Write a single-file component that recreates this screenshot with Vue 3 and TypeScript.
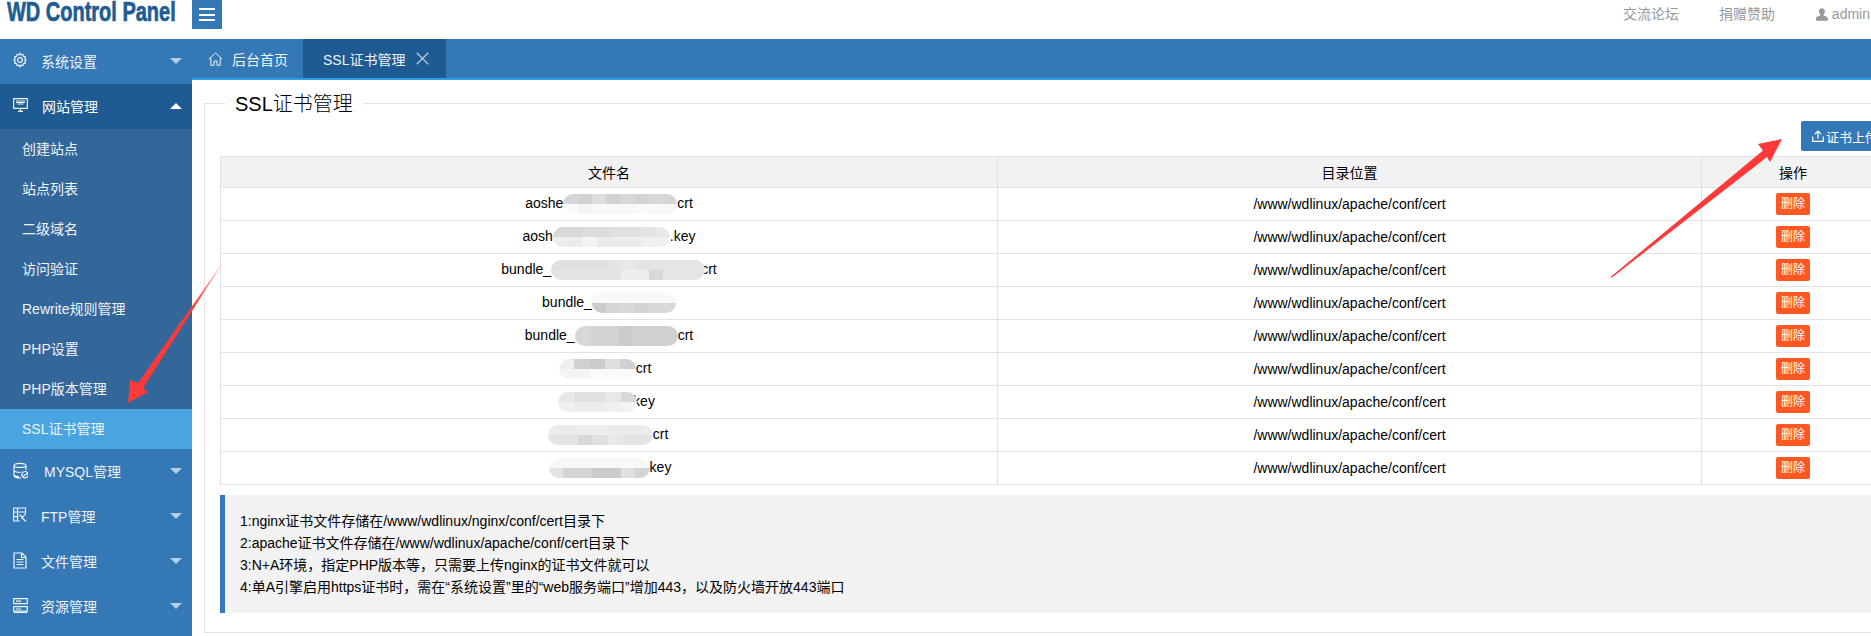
<script setup lang="ts">
interface Menu { label: string; icon: string; gap: number; open?: boolean }
const gear = 'M7 1.2l1 1.7 1.9-.5.5 1.9 1.9.5-.5 1.9 1.2 1.3-1.2 1.3.5 1.9-1.9.5-.5 1.9-1.9-.5L7 14.8l-1-1.7-1.9.5-.5-1.9-1.9-.5.5-1.9L1 8l1.2-1.3-.5-1.9 1.9-.5.5-1.9 1.9.5zM7 5.6a2.4 2.4 0 1 0 0 4.8 2.4 2.4 0 0 0 0-4.8z'
const monitor = 'M.7 1.7h13.6v9.6H.7zM3 4h9M3 5.500h9M4.500 7h6M5 14.3h5M7.5 11.3v3'
const db = 'M1 3.5C1 .7 13 .7 13 3.5v4.5M1 3.5c0 2.6 12 2.6 12 0M1 3.5v10c0 2.2 4.5 2.7 7 2.4M1 8c0 2 4 2.6 6.5 2.4M1 12.5c0 1.3 2.5 2 5 2.1M12 9.5a3.2 3.2 0 1 0 .01 0zM9.800 14.500l4.400-3'
const ftp = 'M12.500 6V1H.7v13h6M.7 5h11.800M.7 9.500H6M4.500 1v13M6.500 7.500l3 3 3.500-4.500M8.500 10.500l4.500 4'
const file = 'M1 1h8l4 4v11H1zM8.500 1v4.500H13M3.500 7.500h7M3.500 10h7M3.500 12.500h7'
const server = 'M.7 1.700h13.600v5H.7zM.7 9.700h13.600v4.500H.7zM.7 15.500h13.600M3 4.200h5M3 12h5'

const topMenus: Menu[] = [
  { label: '系统设置', icon: gear, gap: 13 },
  { label: '网站管理', icon: monitor, gap: 14, open: true },
]
const bottomMenus: Menu[] = [
  { label: 'MYSQL管理', icon: db, gap: 16 },
  { label: 'FTP管理', icon: ftp, gap: 13 },
  { label: '文件管理', icon: file, gap: 13 },
  { label: '资源管理', icon: server, gap: 13 },
]
const subMenus = ['创建站点', '站点列表', '二级域名', '访问验证', 'Rewrite规则管理', 'PHP设置', 'PHP版本管理', 'SSL证书管理']

interface FileRow { pre: string; suf: string; w: number; ml: number; mr: number; tones: string[] }
const t = (s: string) => s.split(' ')
const files: FileRow[] = [
  { pre: 'aoshe', suf: 'crt', w: 114, ml: 0, mr: 0, tones: t('d6 d2 de d2 d8 d4 d8 d6 fa f4 f8 f8 f8 fa f8 f8') },
  { pre: 'aosh', suf: '.key', w: 117, ml: 0, mr: 0, tones: t('d8 d8 dc dc e0 e0 e4 e8 ec ec f4 ec ec ec f0 f0') },
  { pre: 'bundle_', suf: 'crt', w: 154, ml: 0, mr: -4, tones: t('e0 e0 e0 e0 e4 e8 e4 e4 e4 e4 e4 e4 e4 e4 e4 e4 ee ee d8 e6 e6 e6') },
  { pre: 'bundle_', suf: '', w: 84, ml: 0, mr: 0, tones: t('f8 f8 f8 f8 f8 f8 cc d6 d8 d4 d8 d8') },
  { pre: 'bundle_', suf: 'crt', w: 103, ml: 0, mr: 0, tones: t('d8 d4 d4 cc d0 d0 d0 d8 d4 d4 cc d0 d0 d0') },
  { pre: '', suf: 'crt', w: 77, ml: -8, mr: 0, tones: t('ee d0 cc de d0 f4 f4 fa fa fa') },
  { pre: '', suf: 'key', w: 79, ml: -5, mr: -4, tones: t('e8 e0 e0 e8 d8 f0 ec ec f0 f2') },
  { pre: '', suf: 'crt', w: 105, ml: -2, mr: 0, tones: t('ec ec ee ee ec ec ec e4 e4 d8 e0 e8 e4 e4') },
  { pre: '', suf: 'key', w: 101, ml: 2, mr: 0, tones: t('f8 f8 f8 f8 f8 f8 f8 e4 d4 d4 cc cc e0 d4') },
]
const notes = [
  '1:nginx证书文件存储在/www/wdlinux/nginx/conf/cert目录下',
  '2:apache证书文件存储在/www/wdlinux/apache/conf/cert目录下',
  '3:N+A环境，指定PHP版本等，只需要上传nginx的证书文件就可以',
  '4:单A引擎启用https证书时，需在“系统设置”里的“web服务端口”增加443，以及防火墙开放443端口',
]
const blurStyle = (f: FileRow) => ({
  width: f.w + 'px',
  marginLeft: f.ml + 'px',
  marginRight: f.mr + 'px',
  gridTemplateColumns: `repeat(${f.tones.length / 2}, 1fr)`,
})
</script>

<template>
  <div class="app">
    <header class="top">
      <div class="logo"><span>WD Control Panel</span></div>
      <button class="burger" type="button" aria-label="menu"><i></i><i></i><i></i></button>
      <nav class="links">
        <a>交流论坛</a>
        <a>捐赠赞助</a>
        <a class="user">
          <svg width="14" height="15" viewBox="0 0 14 15"><path fill="#9a9a9a" d="M7 0c2.200 0 3.500 1.700 3.500 3.800 0 1.600-.7 3-1.500 3.800v1.200c1.600.6 5 1.300 5 3.200v3H0v-3c0-1.900 3.400-2.600 5-3.200V7.600C4.200 6.800 3.500 5.400 3.500 3.800 3.500 1.700 4.800 0 7 0z"/></svg>
          admin
        </a>
      </nav>
    </header>

    <aside class="side">
      <div v-for="m in topMenus" :key="m.label" class="menu" :class="{ open: m.open }">
        <svg class="ico" width="15" height="17" viewBox="0 0 15 17"><path :d="m.icon"/></svg>
        <span :style="{ marginLeft: m.gap + 'px' }">{{ m.label }}</span>
        <b class="caret"></b>
      </div>
      <ul class="sub">
        <li v-for="(s, i) in subMenus" :key="s" :class="{ on: i === subMenus.length - 1 }">{{ s }}</li>
      </ul>
      <div v-for="m in bottomMenus" :key="m.label" class="menu">
        <svg class="ico" width="15" height="17" viewBox="0 0 15 17"><path :d="m.icon"/></svg>
        <span :style="{ marginLeft: m.gap + 'px' }">{{ m.label }}</span>
        <b class="caret"></b>
      </div>
    </aside>

    <main class="main">
      <div class="tabs">
        <div class="tab home">
          <svg width="15" height="14" viewBox="0 0 15 14"><path d="M.8 7.200 7.500.9l6.700 6.300M2.800 6v7.300h3.200V9h3v4.300h3.200V6"/></svg>
          后台首页
        </div>
        <div class="tab active">
          SSL证书管理
          <svg width="13" height="13" viewBox="0 0 13 13"><path d="M.7.700l11.600 11.600M12.300.700.700 12.300"/></svg>
        </div>
      </div>

      <div class="content">
        <fieldset class="field">
          <legend>SSL证书管理</legend>
          <div class="tools">
            <button class="upload" type="button">
              <svg width="12" height="12" viewBox="0 0 12 12"><path d="M.7 6.500v4.800h10.600V6.500M6 8.500V1M3 4l3-3 3 3"/></svg>
              证书上传
            </button>
          </div>
          <table class="grid">
            <colgroup><col class="c1"><col class="c2"><col class="c3"></colgroup>
            <thead><tr><th>文件名</th><th>目录位置</th><th>操作</th></tr></thead>
            <tbody>
              <tr v-for="(f, i) in files" :key="i">
                <td>{{ f.pre }}<span class="blur" :style="blurStyle(f)"><i v-for="(c, j) in f.tones" :key="j" :style="{ background: '#' + c + c + c }"></i></span>{{ f.suf }}</td>
                <td>/www/wdlinux/apache/conf/cert</td>
                <td><button class="del" type="button">删除</button></td>
              </tr>
            </tbody>
          </table>
          <blockquote class="quote">
            <p v-for="n in notes" :key="n">{{ n }}</p>
          </blockquote>
        </fieldset>
      </div>
    </main>

    <svg class="arrows" width="1871" height="636" viewBox="0 0 1871 636">
      <defs>
        <linearGradient id="a1" x1="226" y1="257" x2="190" y2="308" gradientUnits="userSpaceOnUse">
          <stop offset="0" stop-color="#ffd5d5"/><stop offset="1" stop-color="#ff3838"/>
        </linearGradient>
      </defs>
      <polygon fill="url(#a1)" points="226.500,257 138,383 130,380 128,403 148,392 143,388"/>
      <polygon fill="#ff3838" points="1610.500,277 1763,150.500 1758,144 1782,139 1770,162 1767,157 1612,277.500"/>
    </svg>
  </div>
</template>

<style>
html, body { margin: 0; overflow: hidden; background: #fff; }
</style>

<style scoped>
.app {
  position: relative;
  width: 1913px;
  height: 636px;
  display: grid;
  grid-template-columns: 192px 1fr;
  grid-template-rows: 39px 1fr;
  overflow: hidden;
  font-family: "Liberation Sans", "Noto Sans CJK SC", sans-serif;
  font-size: 14px;
  color: #000;
}
.top {
  grid-column: 1 / -1;
  display: flex;
  align-items: flex-start;
  padding-right: 43px;
}
.logo {
  flex: none;
  width: 192px;
  padding-left: 7px;
  box-sizing: border-box;
  font-family: "Liberation Sans", sans-serif;
  font-weight: 700;
  font-size: 27px;
  line-height: 24px;
  color: #1e5c94;
  white-space: nowrap;
}
.logo span {
  display: inline-block;
  transform: scaleX(0.74);
  transform-origin: left center;
  -webkit-text-stroke: 0.7px #1e5c94;
}
.burger {
  width: 30px;
  height: 29px;
  padding: 0;
  border: 0;
  background: #3478b6;
  display: flex;
  flex-direction: column;
  align-items: center;
  justify-content: center;
  gap: 3.600px;
  position: relative;
}
.burger i { display: block; width: 16px; height: 2px; background: #fff; }
.links {
  margin-left: auto;
  display: flex;
  gap: 40px;
  color: #999;
  line-height: 28px;
}
.links a { display: flex; align-items: center; gap: 4px; white-space: nowrap; }
.links .user { width: 54px; margin-left: 1px; }

.side { background: #3478b6; overflow: hidden; color: #eef3f8; }
.menu {
  height: 45px;
  box-sizing: border-box;
  padding: 0 0 2px 13px;
  display: flex;
  align-items: center;
  position: relative;
}
.menu.open { background: #1e5b92; color: #fff; }
.ico { flex: none; fill: none; stroke: #eef3f8; stroke-width: 1.200; }
.caret {
  position: absolute;
  right: 10px;
  top: 19px;
  border: 6px solid transparent;
  border-top: 6px solid #b6cde4;
  border-bottom: 0;
}
.menu.open .caret { border-top: 0; border-bottom: 6px solid #fff; }
.sub { list-style: none; margin: 0; padding: 0; background: #33679a; }
.sub li { height: 40px; line-height: 40px; padding-left: 22px; }
.sub li.on { background: #48a5e0; }

.main { min-width: 0; display: flex; flex-direction: column; }
.tabs {
  height: 39px;
  display: flex;
  background: #3478b6;
  border-bottom: 2px solid #2a9fe8;
  color: #eef3f8;
}
.tab { display: flex; align-items: center; }
.tab svg { fill: none; stroke: #eef3f8; stroke-width: 1; }
.home { width: 111px; padding-left: 16px; gap: 9px; box-sizing: border-box; }
.active { width: 143px; padding-left: 20px; gap: 11px; box-sizing: border-box; background: #1e5b92; }
.active svg { stroke: #b9c8d8; stroke-width: 1.300; }

.content { padding: 10px 12px 0; }
.field {
  margin: 0;
  padding: 5px 15px 19px;
  border: 1px solid #e2e2e2;
  min-width: 0;
}
legend {
  margin-left: 5px;
  padding: 2px 10px 0;
  font-size: 20px;
  line-height: 24px;
  font-weight: 300;
}
.tools { display: flex; justify-content: flex-end; margin-bottom: 5px; }
.upload {
  height: 30px;
  width: 84px;
  padding: 0 0 0 11px;
  border: 0;
  border-radius: 2px;
  background: #3478b6;
  color: #fff;
  font: 13px "Liberation Sans", "Noto Sans CJK SC", sans-serif;
  display: flex;
  align-items: center;
  gap: 2px;
  white-space: nowrap;
}
.upload svg { fill: none; stroke: #fff; stroke-width: 1.200; flex: none; }
.grid {
  width: 100%;
  table-layout: fixed;
  border-collapse: collapse;
  text-align: center;
}
.c1 { width: 777px; }
.c2 { width: 704px; }
.grid th, .grid td { border: 1px solid #e2e2e2; padding: 0; font-weight: 400; }
.grid th { height: 30px; background: #f2f2f2; }
.grid td { height: 32px; }
.blur {
  position: relative;
  display: inline-grid;
  grid-auto-rows: 10px;
  height: 20px;
  vertical-align: middle;
  border-radius: 10px;
  overflow: hidden;
}
.blur i { display: block; }
.del {
  height: 22px;
  width: 34px;
  padding: 0;
  border: 0;
  border-radius: 2px;
  background: #ff5722;
  color: #fff;
  font: 12px/22px "Liberation Sans", "Noto Sans CJK SC", sans-serif;
  display: block;
  margin: 0 auto;
}
.quote {
  margin: 10px 0 0;
  padding: 15px;
  border-left: 5px solid #3478b6;
  background: #f2f2f2;
  line-height: 22px;
}
.quote p { margin: 0; }
.arrows { position: absolute; left: 0; top: 0; pointer-events: none; }
</style>
